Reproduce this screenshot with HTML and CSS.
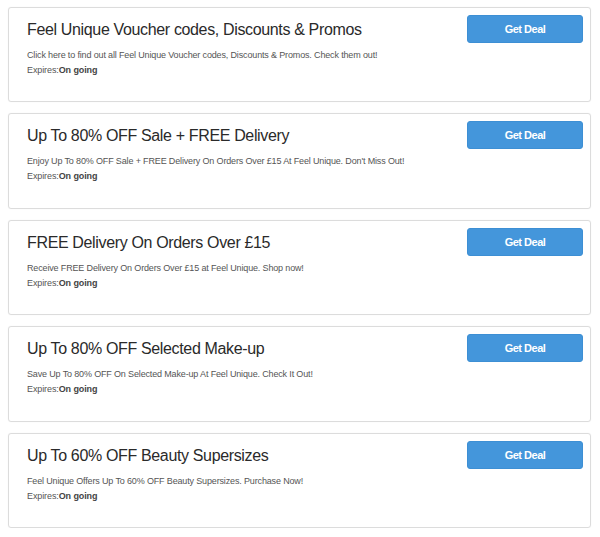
FILE: index.html
```html
<!DOCTYPE html>
<html>
<head>
<meta charset="utf-8">
<link rel="stylesheet" href="styles.css">
</head>
<body>
<div class="list">
  <div class="card">
    <div class="info">
      <h3 class="title">Feel Unique Voucher codes, Discounts &amp; Promos</h3>
      <p class="desc">Click here to find out all Feel Unique Voucher codes, Discounts &amp; Promos. Check them out!</p>
      <p class="exp">Expires:<b>On going</b></p>
    </div>
    <a class="btn">Get Deal</a>
  </div>
  <div class="card">
    <div class="info">
      <h3 class="title">Up To 80% OFF Sale + FREE Delivery</h3>
      <p class="desc">Enjoy Up To 80% OFF Sale + FREE Delivery On Orders Over £15 At Feel Unique. Don't Miss Out!</p>
      <p class="exp">Expires:<b>On going</b></p>
    </div>
    <a class="btn">Get Deal</a>
  </div>
  <div class="card">
    <div class="info">
      <h3 class="title">FREE Delivery On Orders Over £15</h3>
      <p class="desc">Receive FREE Delivery On Orders Over £15 at Feel Unique. Shop now!</p>
      <p class="exp">Expires:<b>On going</b></p>
    </div>
    <a class="btn">Get Deal</a>
  </div>
  <div class="card">
    <div class="info">
      <h3 class="title">Up To 80% OFF Selected Make-up</h3>
      <p class="desc">Save Up To 80% OFF On Selected Make-up At Feel Unique. Check It Out!</p>
      <p class="exp">Expires:<b>On going</b></p>
    </div>
    <a class="btn">Get Deal</a>
  </div>
  <div class="card">
    <div class="info">
      <h3 class="title">Up To 60% OFF Beauty Supersizes</h3>
      <p class="desc">Feel Unique Offers Up To 60% OFF Beauty Supersizes. Purchase Now!</p>
      <p class="exp">Expires:<b>On going</b></p>
    </div>
    <a class="btn">Get Deal</a>
  </div>
</div>
</body>
</html>
```
FILE: styles.css
```css
html, body {
  margin: 0;
  padding: 0;
  background: #fff;
  font-family: "Liberation Sans", Arial, sans-serif;
}
.list {
  padding: 7px 9px 0 8px;
  display: flex;
  flex-direction: column;
  gap: 11px;
}
.card {
  height: 95.4px;
  box-sizing: border-box;
  border: 1px solid #dcdcdc;
  box-shadow: 0 0 1px #e6e6e6;
  border-radius: 3px;
  display: flex;
  justify-content: space-between;
  align-items: flex-start;
  padding: 7px 7px 0 18px;
}
.info {
  padding-top: 5px;
}
.title {
  margin: 0;
  font-size: 16px;
  letter-spacing: -0.35px;
  font-weight: normal;
  color: #2a2a2a;
  line-height: 20px;
}
.desc {
  margin: 8px 0 0;
  font-size: 9px;
  letter-spacing: -0.15px;
  color: #555;
  line-height: 15px;
}
.exp {
  margin: 0;
  font-size: 9px;
  letter-spacing: -0.1px;
  color: #555;
  line-height: 15px;
}
.exp b {
  color: #444;
}
.btn {
  flex: none;
  width: 116px;
  height: 28px;
  box-sizing: border-box;
  background: #4496db;
  border: 1px solid #3d8fd4;
  border-radius: 3px;
  color: #fff;
  font-size: 11px;
  font-weight: bold;
  letter-spacing: -0.5px;
  display: flex;
  align-items: center;
  justify-content: center;
}
```
